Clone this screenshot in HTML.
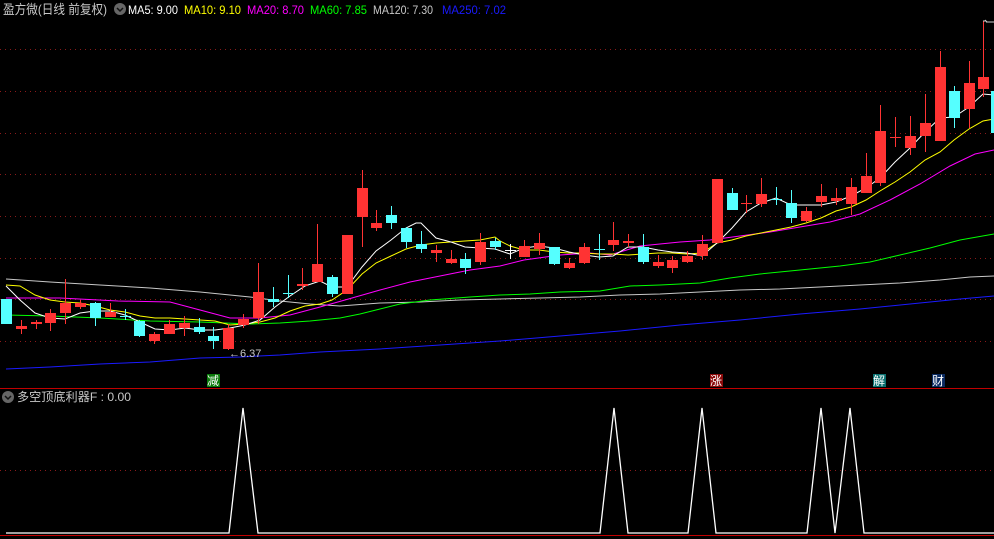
<!DOCTYPE html>
<html><head><meta charset="utf-8"><style>
html,body{margin:0;padding:0;background:#000;width:994px;height:539px;overflow:hidden}
svg{display:block}
text{font-family:"Liberation Sans","Noto Sans CJK SC",sans-serif}
</style></head><body>
<svg width="994" height="539" viewBox="0 0 994 539" xmlns="http://www.w3.org/2000/svg">
<rect width="994" height="539" fill="#000"/>
<g stroke="#8a1a1a" stroke-width="1" stroke-dasharray="1,4">
<line x1="0" y1="49.5" x2="994" y2="49.5"/><line x1="0" y1="91.5" x2="994" y2="91.5"/>
<line x1="0" y1="133.5" x2="994" y2="133.5"/><line x1="0" y1="174.5" x2="994" y2="174.5"/>
<line x1="0" y1="216.5" x2="994" y2="216.5"/><line x1="0" y1="258.5" x2="994" y2="258.5"/>
<line x1="0" y1="299.5" x2="994" y2="299.5"/><line x1="0" y1="341.5" x2="994" y2="341.5"/>
<line x1="0" y1="470.5" x2="994" y2="470.5"/>
</g>
<line x1="0" y1="388.5" x2="994" y2="388.5" stroke="#c00000"/>
<line x1="0" y1="535.5" x2="994" y2="535.5" stroke="#c00000"/>
<text x="3" y="14" font-size="13" fill="#c8c8c8" textLength="104" lengthAdjust="spacingAndGlyphs">盈方微(日线 前复权)</text>
<circle cx="120" cy="9" r="6" fill="#666"/><path d="M117 8l3 3 3-3" stroke="#111" stroke-width="1.5" fill="none"/>
<g font-size="12" lengthAdjust="spacingAndGlyphs">
<text x="128" y="14" fill="#fff" textLength="50" lengthAdjust="spacingAndGlyphs">MA5: 9.00</text>
<text x="184" y="14" fill="#ff0" textLength="57" lengthAdjust="spacingAndGlyphs">MA10: 9.10</text>
<text x="247" y="14" fill="#f0f" textLength="57" lengthAdjust="spacingAndGlyphs">MA20: 8.70</text>
<text x="310" y="14" fill="#0f0" textLength="57" lengthAdjust="spacingAndGlyphs">MA60: 7.85</text>
<text x="373" y="14" fill="#c8c8c8" textLength="60" lengthAdjust="spacingAndGlyphs">MA120: 7.30</text>
<text x="442" y="14" fill="#1a1aff" textLength="64" lengthAdjust="spacingAndGlyphs">MA250: 7.02</text>
</g>
<!-- MAs -->
<g fill="none" stroke-width="1">
<polyline stroke="#1a1aff" points="6,369 50,367 100,364 150,362 200,358 240,357 280,355 320,352 380,349 440,345 500,341 560,336 620,331 680,325 740,320 800,314 860,309 920,303 960,299 994,296"/>
<polyline stroke="#c8c8c8" points="6,279 50,282 100,285 150,288 200,292 250,297 280,301 310,304 340,306 380,303 420,302 460,300 500,299 540,298 580,297 620,295 660,294 700,292 740,290 780,289 820,287 860,285 900,283 940,280 970,277 994,276"/>
<polyline stroke="#0f0" points="6,315 50,316 100,318 150,321 200,322 250,324 280,323 310,321 340,318 360,314 380,309 400,304 430,300 470,297 500,295 530,294 560,292 600,291 630,286 660,285 700,283 730,278 760,274 800,270 840,266 870,262 900,255 930,248 960,240 994,234"/>
<polyline stroke="#f0f" points="6,298 60,298 118,301 170,302 200,310 230,318 260,318 290,315 320,307 345,300 380,290 410,282 440,276 470,270 500,266 524,260 560,255 590,253 610,255 640,246 680,242 710,240 740,236 770,232 800,227 830,222 860,214 890,200 920,184 950,166 975,154 994,150"/>
<polyline stroke="#ff0" points="6,285 20,286 35,295 50,300 65,302 80,303 95,306 110,310 125,312 140,316 155,318 170,318 185,319 200,320 215,321 230,325 245,324 260,322 275,318 290,311 305,306 320,304 332,300 347,290 362,274 376,263 391,256 406,249 421,245 436,243 451,242 465,241 480,240 495,237 500,241 510,246 524,250 539,250 554,252 569,253 584,253 599,254 613,254 628,255 643,254 658,253 672,253 687,254 702,253 717,243 732,240 746,236 761,233 776,230 791,227 806,223 821,218 836,211 851,207 866,200 880,191 895,182 910,172 925,160 940,152 954,140 969,129 983,121 994,119"/>
<polyline stroke="#fff" points="6,286 20,300 35,313 50,318 65,319 80,313 95,311 110,311 125,315 140,322 155,329 170,330 185,328 200,330 215,330 230,328 245,325 260,320 275,307 290,296 305,286 320,281 332,287 347,287 362,267 376,251 391,240 406,228 416,223 421,223 436,238 451,242 465,247 480,248 495,249 510,254 524,248 539,246 554,248 569,252 584,255 599,257 613,256 628,247 643,247 658,250 672,252 687,253 702,256 717,243 732,228 746,212 761,203 776,198 791,205 806,205 821,205 836,202 851,196 866,188 880,178 895,162 910,148 925,132 940,118 954,117 969,107 983,94 994,95"/>
</g>
<g stroke-width="1">
<g stroke="#ff3333">
<line x1="21.5" y1="320" x2="21.5" y2="334"/><line x1="36.5" y1="320" x2="36.5" y2="329"/><line x1="50.5" y1="309" x2="50.5" y2="331"/><line x1="65.5" y1="279" x2="65.5" y2="324"/><line x1="80.5" y1="300" x2="80.5" y2="309"/><line x1="110.5" y1="303" x2="110.5" y2="317"/><line x1="154.5" y1="332" x2="154.5" y2="344"/><line x1="169.5" y1="320" x2="169.5" y2="334"/><line x1="184.5" y1="316" x2="184.5" y2="336"/><line x1="228.5" y1="324" x2="228.5" y2="350"/><line x1="243.5" y1="314" x2="243.5" y2="328"/><line x1="258.5" y1="263" x2="258.5" y2="324"/><line x1="302.5" y1="268" x2="302.5" y2="290"/><line x1="317.5" y1="224" x2="317.5" y2="282"/><line x1="362.5" y1="170" x2="362.5" y2="247"/><line x1="376.5" y1="210" x2="376.5" y2="231"/><line x1="436.5" y1="245" x2="436.5" y2="262"/><line x1="451.5" y1="250" x2="451.5" y2="264"/><line x1="480.5" y1="233" x2="480.5" y2="265"/><line x1="524.5" y1="240" x2="524.5" y2="257"/><line x1="539.5" y1="233" x2="539.5" y2="255"/><line x1="569.5" y1="258" x2="569.5" y2="269"/><line x1="584.5" y1="243" x2="584.5" y2="264"/><line x1="613.5" y1="222" x2="613.5" y2="251"/><line x1="628.5" y1="234" x2="628.5" y2="247"/><line x1="658.5" y1="255" x2="658.5" y2="268"/><line x1="672.5" y1="256" x2="672.5" y2="273"/><line x1="687.5" y1="251" x2="687.5" y2="263"/><line x1="702.5" y1="235" x2="702.5" y2="260"/><line x1="746.5" y1="195" x2="746.5" y2="213"/><line x1="761.5" y1="178" x2="761.5" y2="207"/><line x1="806.5" y1="207" x2="806.5" y2="222"/><line x1="821.5" y1="184" x2="821.5" y2="207"/><line x1="836.5" y1="188" x2="836.5" y2="205"/><line x1="851.5" y1="178" x2="851.5" y2="215"/><line x1="866.5" y1="153" x2="866.5" y2="193"/><line x1="880.5" y1="105" x2="880.5" y2="186"/><line x1="895.5" y1="117" x2="895.5" y2="147"/><line x1="910.5" y1="116" x2="910.5" y2="155"/><line x1="925.5" y1="94" x2="925.5" y2="152"/><line x1="940.5" y1="51" x2="940.5" y2="141"/><line x1="969.5" y1="61" x2="969.5" y2="128"/><line x1="983.5" y1="21" x2="983.5" y2="97"/>
<line x1="741" y1="203.5" x2="752" y2="203.5"/><line x1="890" y1="137.5" x2="901" y2="137.5"/>
</g>
<g stroke="#55ffff">
<line x1="95.5" y1="302" x2="95.5" y2="326"/><line x1="125.5" y1="309" x2="125.5" y2="320"/><line x1="139.5" y1="320" x2="139.5" y2="337"/><line x1="199.5" y1="318" x2="199.5" y2="334"/><line x1="213.5" y1="327" x2="213.5" y2="349"/><line x1="273.5" y1="287" x2="273.5" y2="307"/><line x1="288.5" y1="275" x2="288.5" y2="298"/><line x1="332.5" y1="275" x2="332.5" y2="297"/><line x1="391.5" y1="206" x2="391.5" y2="229"/><line x1="406.5" y1="227" x2="406.5" y2="248"/><line x1="421.5" y1="231" x2="421.5" y2="253"/><line x1="465.5" y1="253" x2="465.5" y2="274"/><line x1="495.5" y1="238" x2="495.5" y2="250"/><line x1="554.5" y1="247" x2="554.5" y2="265"/><line x1="599.5" y1="234" x2="599.5" y2="260"/><line x1="643.5" y1="234" x2="643.5" y2="264"/><line x1="732.5" y1="188" x2="732.5" y2="210"/><line x1="776.5" y1="187" x2="776.5" y2="205"/><line x1="791.5" y1="190" x2="791.5" y2="223"/><line x1="954.5" y1="86" x2="954.5" y2="128"/>
<line x1="120" y1="316.5" x2="131" y2="316.5"/><line x1="283" y1="293.5" x2="294" y2="293.5"/><line x1="594" y1="249.5" x2="605" y2="249.5"/><line x1="771" y1="199.5" x2="782" y2="199.5"/>
</g>
<g stroke="#fff"><line x1="510.5" y1="244" x2="510.5" y2="259"/><line x1="505" y1="250.5" x2="516" y2="250.5"/></g>
</g>
<g fill="#ff3333">
<rect x="16" y="326" width="11" height="3"/><rect x="31" y="322" width="11" height="2"/><rect x="45" y="313" width="11" height="10"/><rect x="60" y="303" width="11" height="10"/><rect x="75" y="303" width="11" height="4"/><rect x="105" y="312" width="11" height="5"/><rect x="149" y="334" width="11" height="7"/><rect x="164" y="324" width="11" height="10"/><rect x="179" y="323" width="11" height="5"/><rect x="223" y="328" width="11" height="21"/><rect x="238" y="319" width="11" height="6"/><rect x="253" y="292" width="11" height="26"/><rect x="297" y="284" width="11" height="2"/><rect x="312" y="264" width="11" height="18"/><rect x="342" y="235" width="11" height="59"/><rect x="357" y="188" width="11" height="29"/><rect x="371" y="223" width="11" height="5"/><rect x="431" y="250" width="11" height="3"/><rect x="446" y="259" width="11" height="4"/><rect x="475" y="242" width="11" height="20"/><rect x="519" y="246" width="11" height="11"/><rect x="534" y="243" width="11" height="6"/><rect x="564" y="263" width="11" height="5"/><rect x="579" y="247" width="11" height="16"/><rect x="608" y="240" width="11" height="5"/><rect x="623" y="241" width="11" height="2"/><rect x="653" y="262" width="11" height="4"/><rect x="667" y="260" width="11" height="8"/><rect x="682" y="256" width="11" height="6"/><rect x="697" y="244" width="11" height="12"/><rect x="712" y="179" width="11" height="64"/><rect x="756" y="194" width="11" height="10"/><rect x="801" y="211" width="11" height="10"/><rect x="816" y="196" width="11" height="6"/><rect x="831" y="198" width="11" height="3"/><rect x="846" y="187" width="11" height="17"/><rect x="861" y="176" width="11" height="17"/><rect x="875" y="131" width="11" height="52"/><rect x="905" y="136" width="11" height="12"/><rect x="920" y="123" width="11" height="13"/><rect x="935" y="67" width="11" height="74"/><rect x="964" y="83" width="11" height="26"/><rect x="978" y="77" width="11" height="12"/>
</g>
<g fill="#55ffff">
<rect x="1" y="299" width="11" height="25"/><rect x="90" y="303" width="11" height="15"/><rect x="134" y="321" width="11" height="15"/><rect x="194" y="327" width="11" height="5"/><rect x="208" y="336" width="11" height="5"/><rect x="268" y="299" width="11" height="3"/><rect x="327" y="277" width="11" height="17"/><rect x="386" y="215" width="11" height="8"/><rect x="401" y="228" width="11" height="14"/><rect x="416" y="244" width="11" height="5"/><rect x="460" y="259" width="11" height="9"/><rect x="490" y="241" width="11" height="6"/><rect x="549" y="247" width="11" height="17"/><rect x="638" y="247" width="11" height="15"/><rect x="727" y="193" width="11" height="17"/><rect x="786" y="203" width="11" height="15"/><rect x="949" y="91" width="11" height="27"/><rect x="991" y="91" width="3" height="42"/>
</g>
<path d="M983 21h3M985 20l2 2M986 22h8" stroke="#ccc" fill="none"/>
<text x="229" y="357" font-size="11" fill="#c8c8c8">←6.37</text>
<rect x="207" y="374" width="13" height="13" fill="#0a7a0a"/><text x="207" y="385" font-size="12" fill="#fff">减</text>
<rect x="710" y="374" width="13" height="13" fill="#8a0a0a"/><text x="710" y="385" font-size="12" fill="#fff">涨</text>
<rect x="873" y="374" width="13" height="13" fill="#0a7070"/><text x="873" y="385" font-size="12" fill="#fff">解</text>
<rect x="932" y="374" width="13" height="13" fill="#0a2a60"/><text x="932" y="385" font-size="12" fill="#fff">财</text>
<circle cx="8" cy="397" r="6" fill="#666"/><path d="M5 396l3 3 3-3" stroke="#111" stroke-width="1.5" fill="none"/>
<text x="17" y="401" font-size="12" fill="#c8c8c8" textLength="114" lengthAdjust="spacingAndGlyphs">多空顶底利器F : 0.00</text>
<polyline fill="none" stroke="#fff" stroke-width="1.3" points="6,533 229,533 243,408 258,533 600,533 614,408 628,533 688,533 702,408 716,533 807,533 821,408 835,533 850,408 864,533 994,533"/>
</svg>
</body></html>
